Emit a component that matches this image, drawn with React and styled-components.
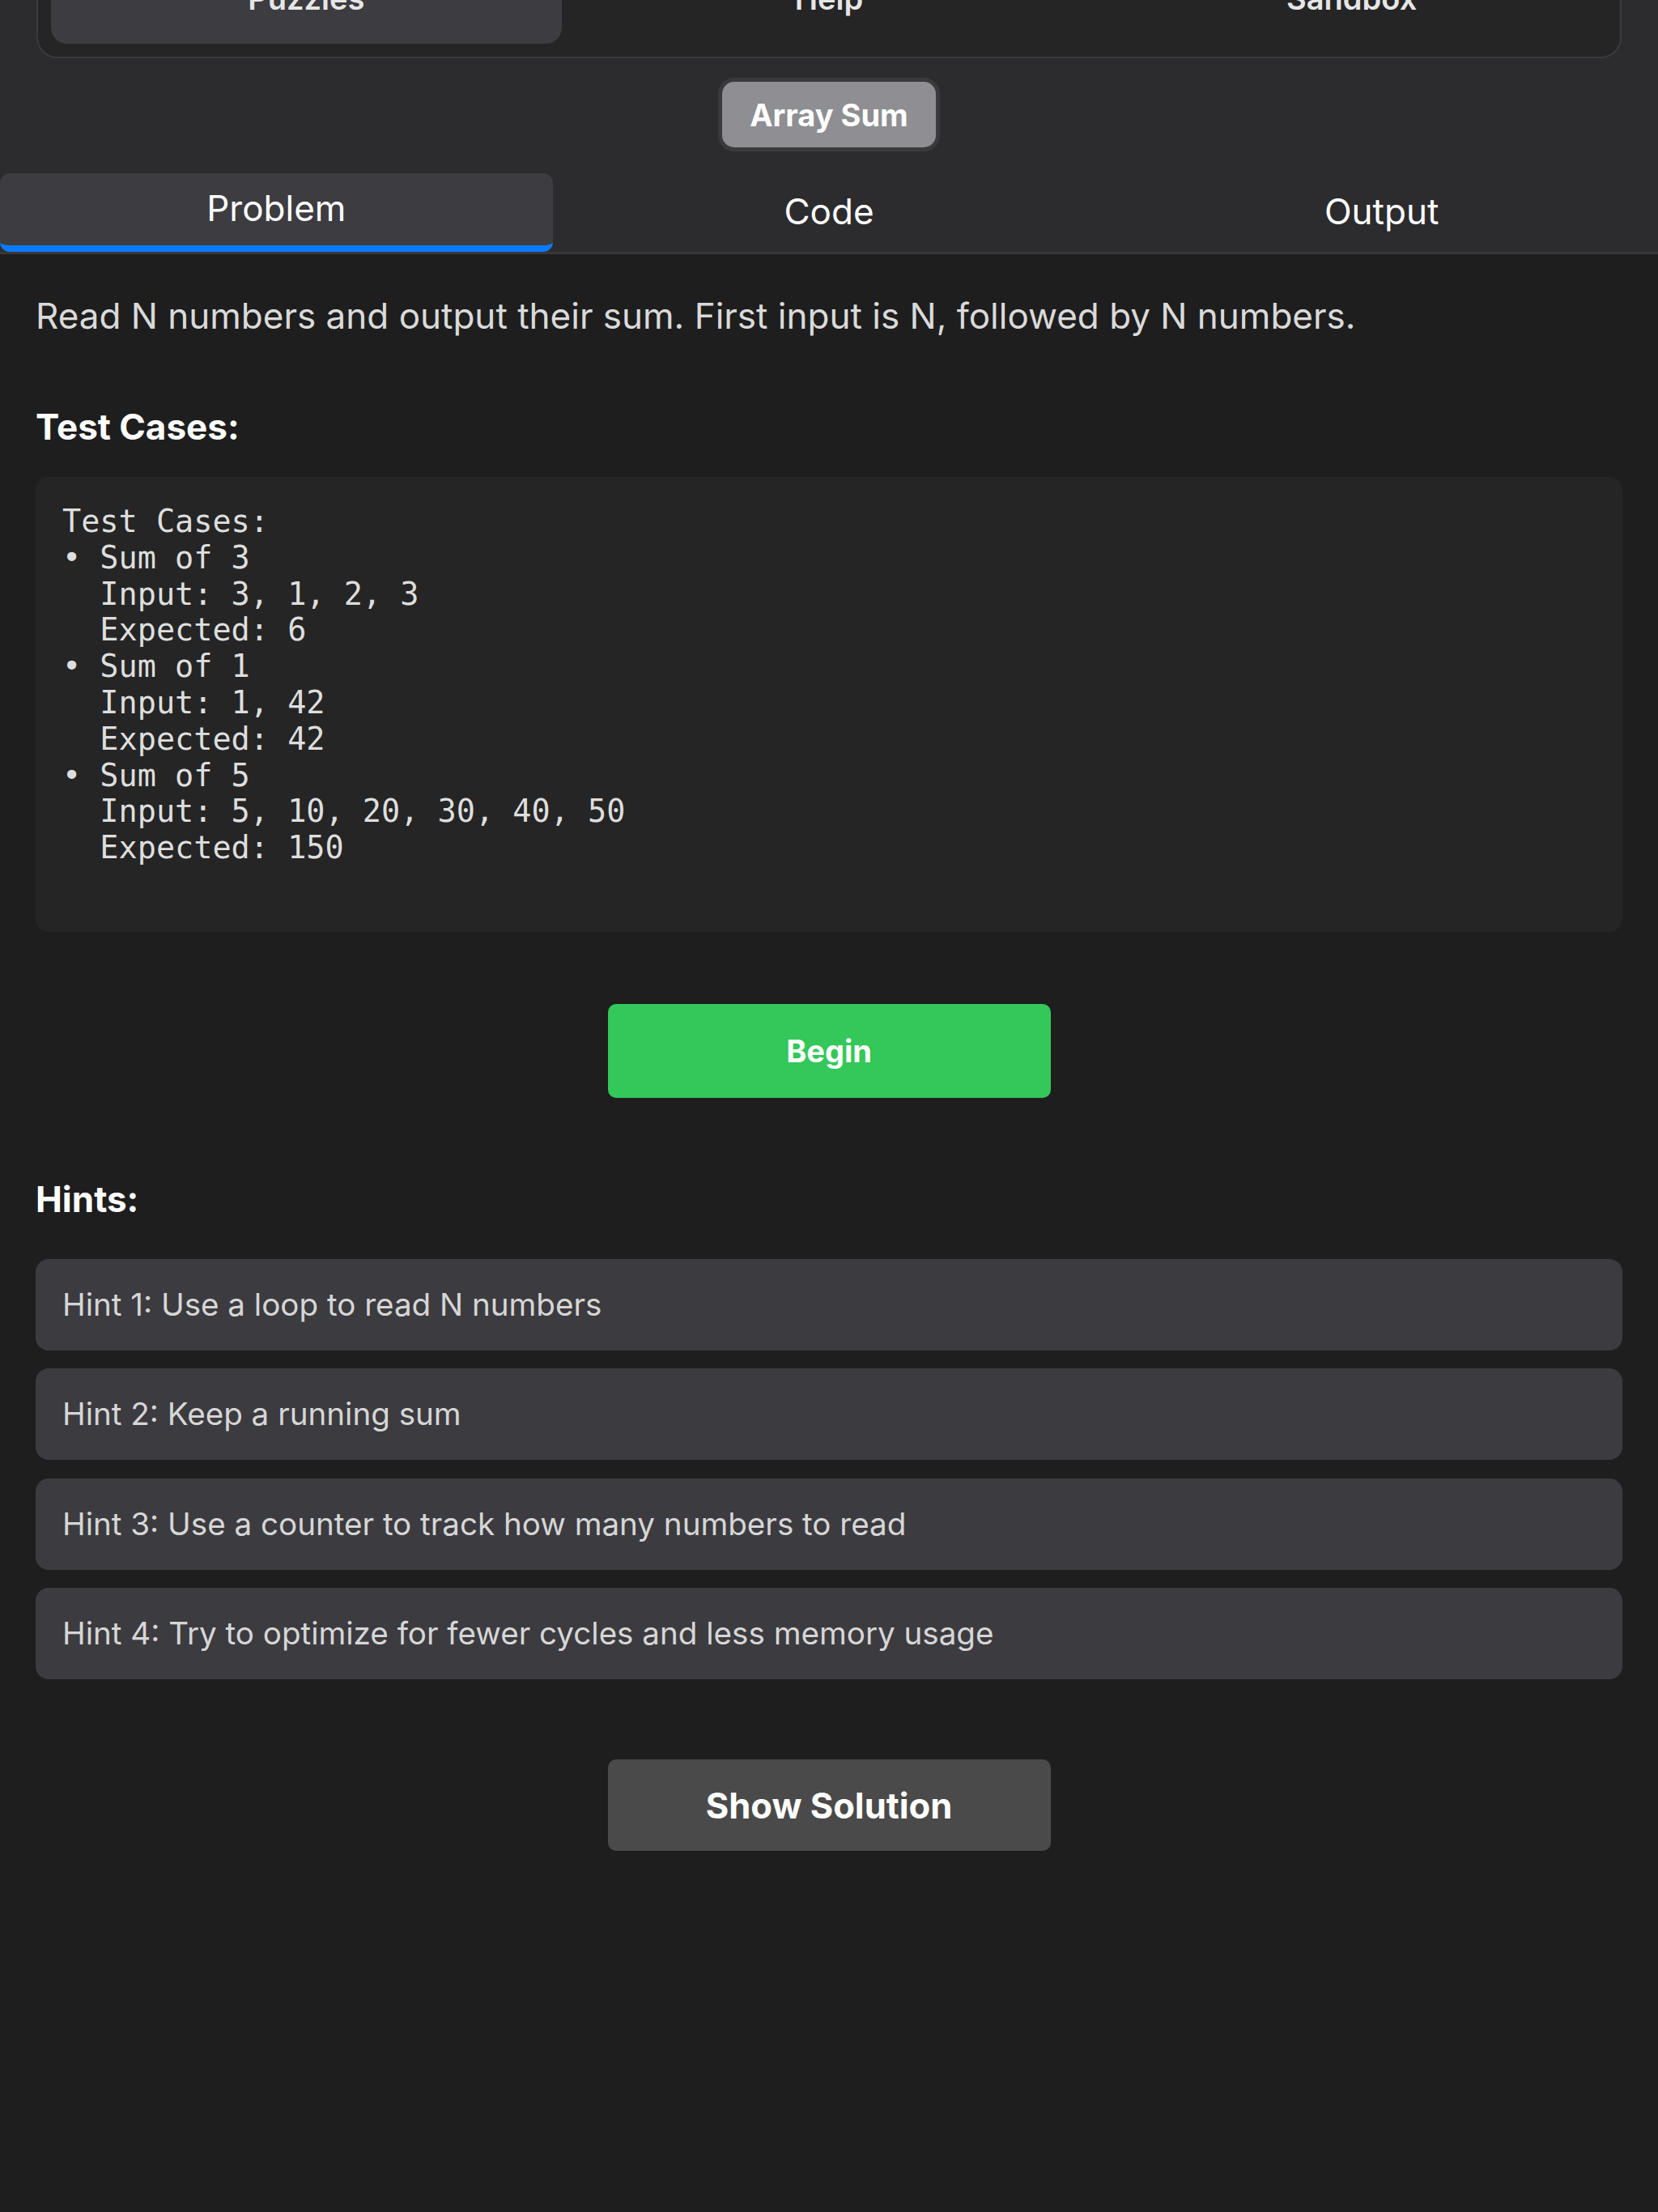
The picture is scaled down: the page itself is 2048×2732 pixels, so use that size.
import React, { useState } from "react";
import styled, { createGlobalStyle } from "styled-components";

const GlobalStyle = createGlobalStyle`
  html, body {
    margin: 0;
    padding: 0;
    background: #1e1e1e;
  }
  body {
    font-family: Inter, "Noto Sans", "Liberation Sans", sans-serif;
    -webkit-font-smoothing: antialiased;
  }
  * { box-sizing: border-box; }
`;

const Page = styled.div`
  min-height: 2732px;
  background: #1e1e1e;
  overflow: hidden;
`;

const Header = styled.header`
  background: #2c2c2e;
  border-bottom: 3px solid #38383a;
`;

const Nav = styled.nav`
  margin: -76px 45px 0;
  padding: 16px;
  display: grid;
  grid-template-columns: repeat(3, 1fr);
  gap: 15px;
  background: #252526;
  border: 2px solid #3b3b3f;
  border-radius: 26px;
`;

const NavTab = styled.button`
  height: 112px;
  border: none;
  border-radius: 20px;
  background: ${(p) => (p.$active ? "#3d3c41" : "transparent")};
  color: #e6e6e6;
  font-family: inherit;
  font-size: 38px;
  font-weight: 600;
`;

const TitleRow = styled.div`
  display: flex;
  justify-content: center;
  padding-top: 24px;
`;

const PuzzleTitle = styled.button`
  height: 91px;
  padding: 0 34px;
  border: 5px solid #3a3a3d;
  border-radius: 20px;
  background: #8e8e93;
  color: #ffffff;
  font-family: inherit;
  font-size: 38px;
  font-weight: 700;
  line-height: 1;
`;

const Tabs = styled.div`
  display: grid;
  grid-template-columns: repeat(3, 1fr);
  margin-top: 27px;
`;

const Tab = styled.button`
  height: 97px;
  padding: 0 6px 3px;
  border: none;
  border-bottom: ${(p) => (p.$active ? "8px solid #0a7aff" : "0")};
  border-radius: 12px;
  background: ${(p) => (p.$active ? "#3d3c41" : "transparent")};
  color: #ffffff;
  font-family: inherit;
  font-size: 44px;
  font-weight: 400;
  line-height: 52px;
`;

const Content = styled.main`
  padding: 52px 44px 0;
`;

const Description = styled.p`
  margin: 0;
  color: #dadada;
  font-size: 44px;
  line-height: 49px;
`;

const SectionTitle = styled.h3`
  margin: ${(p) => p.$top}px 0 0;
  color: #ffffff;
  font-size: 44px;
  font-weight: 700;
  line-height: 49px;
`;

const CasesBlock = styled.pre`
  margin: 37px 0 0;
  padding: 33px 33px 81px;
  background: #252525;
  border-radius: 16px;
  color: #dedede;
  font-family: "DejaVu Sans Mono", "Liberation Mono", monospace;
  font-size: 38.5px;
  line-height: 44.8px;
  white-space: pre-wrap;
`;

const ActionRow = styled.div`
  display: flex;
  justify-content: center;
  margin-top: ${(p) => p.$top}px;
`;

const ActionButton = styled.button`
  width: 547px;
  height: ${(p) => p.$height}px;
  border: none;
  border-radius: 10px;
  background: ${(p) => p.$bg};
  color: #ffffff;
  font-family: inherit;
  font-size: ${(p) => p.$size}px;
  font-weight: 700;
`;

const HintList = styled.div`
  margin-top: 49px;
  display: flex;
  flex-direction: column;
  gap: 22.5px;
`;

const Hint = styled.div`
  padding: 33px;
  background: #3c3b40;
  border-radius: 16px;
  color: #d6d6d6;
  font-size: 38.6px;
  line-height: 47px;
`;

const navItems = ["Puzzles", "Help", "Sandbox"];
const tabItems = ["Problem", "Code", "Output"];

const cases = [
  { name: "Sum of 3", input: "3, 1, 2, 3", expected: "6" },
  { name: "Sum of 1", input: "1, 42", expected: "42" },
  { name: "Sum of 5", input: "5, 10, 20, 30, 40, 50", expected: "150" },
];

const hints = [
  "Hint 1: Use a loop to read N numbers",
  "Hint 2: Keep a running sum",
  "Hint 3: Use a counter to track how many numbers to read",
  "Hint 4: Try to optimize for fewer cycles and less memory usage",
];

const casesText =
  "Test Cases:\n" +
  cases
    .map((c) => `• ${c.name}\n  Input: ${c.input}\n  Expected: ${c.expected}`)
    .join("\n");

export default function App() {
  const [tab, setTab] = useState("Problem");
  return (
    <Page>
      <GlobalStyle />
      <Header>
        <Nav>
          {navItems.map((n) => (
            <NavTab key={n} $active={n === "Puzzles"}>
              {n}
            </NavTab>
          ))}
        </Nav>
        <TitleRow>
          <PuzzleTitle>Array Sum</PuzzleTitle>
        </TitleRow>
        <Tabs>
          {tabItems.map((t) => (
            <Tab key={t} $active={t === tab} onClick={() => setTab(t)}>
              {t}
            </Tab>
          ))}
        </Tabs>
      </Header>
      <Content>
        <Description>
          Read N numbers and output their sum. First input is N, followed by N numbers.
        </Description>
        <SectionTitle $top={88}>Test Cases:</SectionTitle>
        <CasesBlock>{casesText}</CasesBlock>
        <ActionRow $top={89}>
          <ActionButton $height={116} $bg="#34c759" $size={38}>
            Begin
          </ActionButton>
        </ActionRow>
        <SectionTitle $top={101}>Hints:</SectionTitle>
        <HintList>
          {hints.map((h) => (
            <Hint key={h}>{h}</Hint>
          ))}
        </HintList>
        <ActionRow $top={99}>
          <ActionButton $height={113} $bg="#4a4a4a" $size={43.5}>
            Show Solution
          </ActionButton>
        </ActionRow>
      </Content>
    </Page>
  );
}
